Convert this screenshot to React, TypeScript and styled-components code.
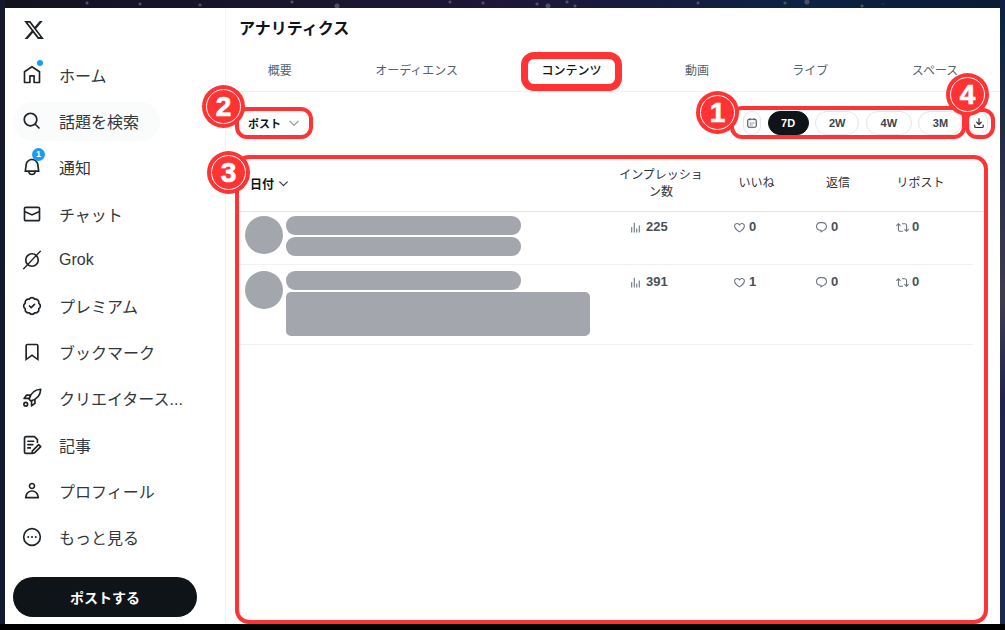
import React from 'react';
import styled, { createGlobalStyle } from 'styled-components';

const GlobalStyle = createGlobalStyle`
  html, body {
    margin: 0;
    padding: 0;
    background: #000;
  }
  body {
    font-family: 'Liberation Sans', 'Noto Sans CJK JP', sans-serif;
  }
`;

const Desktop = styled.div`
  position: relative;
  width: 1005px;
  height: 630px;
  overflow: hidden;
  background-color: #000;
`;

// speckles of the wallpaper that show above the window
const stars = [
  [87, 3, 2], [140, 4, 2], [200, 5, 2], [292, 2, 2], [337, 6, 3], [450, 2, 2], [483, 3, 2],
  [537, 4, 2], [548, 6, 3], [567, 2, 2], [575, 6, 2], [698, 3, 2], [785, 3, 2], [807, 2, 3], [862, 6, 2], [883, 4, 1],
]
  .map(([x, y, r]) => `radial-gradient(circle at ${x}px ${y}px, #4f4f62 0 ${r - 1}px, transparent ${r}px)`)
  .join(', ');

const Wallpaper = styled.div`
  height: 624px;
  padding: 8px 5px 0;
  box-sizing: border-box;
  background:
    ${stars},
    linear-gradient(180deg, #0c2040 0, #3f3c4c 300px, #1e2450 400px, #1c2850 100%) right / 5px 100% no-repeat,
    linear-gradient(180deg, #141828 0, #141a34 100%) left / 5px 100% no-repeat,
    linear-gradient(90deg, #13131f 0%, #1f1638 50%, #0d2343 80%, #0a1a33 100%);
`;

const Window = styled.div`
  display: flex;
  height: 616px;
  background-color: #fff;
`;

const Sidebar = styled.nav`
  display: flex;
  flex-direction: column;
  flex: 0 0 221px;
  box-sizing: border-box;
  border-right: 1px solid #eff3f4;
`;

const LogoRow = styled.div`
  display: flex;
  align-items: center;
  height: 44px;
  padding-left: 18px;
`;

const NavList = styled.div`
  display: flex;
  flex-direction: column;
`;

const NavRow = styled.div`
  display: flex;
  align-items: center;
  height: 46.2px;
`;

const NavPill = styled.div<{ $active?: boolean }>`
  display: flex;
  align-items: center;
  gap: 17px;
  height: 39px;
  width: 147px;
  margin-left: 8px;
  padding-left: 9px;
  box-sizing: border-box;
  border-radius: 20px;
  white-space: nowrap;
  background-color: ${({ $active }) => ($active ? '#fafbfb' : 'transparent')};
`;

const NavIcon = styled.span`
  position: relative;
  display: flex;
  flex: 0 0 20px;
  color: #1f2428;
`;

const NavLabel = styled.span`
  font-size: 16px;
  color: #33383d;
`;

const Dot = styled.span`
  position: absolute;
  top: -5px;
  right: -1px;
  width: 6px;
  height: 6px;
  border-radius: 50%;
  background-color: #1d9bf0;
`;

const CountBadge = styled.span`
  position: absolute;
  top: -9px;
  right: -3px;
  width: 13px;
  height: 13px;
  border-radius: 50%;
  background-color: #1d9bf0;
  color: #fff;
  font-size: 9px;
  font-weight: 700;
  line-height: 13px;
  text-align: center;
`;

const PostButton = styled.button`
  margin: 17px 0 0 8px;
  width: 184px;
  height: 40px;
  border: none;
  border-radius: 20px;
  background-color: #0f1419;
  color: #fff;
  font-family: inherit;
  font-size: 14px;
  font-weight: 700;
`;

const Main = styled.main`
  display: flex;
  flex-direction: column;
  flex: 1;
  min-width: 0;
`;

const Title = styled.h1`
  margin: 0;
  padding: 11px 0 0 13px;
  height: 28px;
  font-size: 16px;
  line-height: 20px;
  font-weight: 700;
  color: #0f1419;
`;

const Tabs = styled.div`
  display: flex;
  justify-content: space-around;
  align-items: center;
  height: 44px;
  border-bottom: 1px solid #eff3f4;
  box-sizing: content-box;
`;

const Tab = styled.span<{ $active?: boolean }>`
  font-size: 12px;
  font-weight: ${({ $active }) => ($active ? 500 : 400)};
  color: ${({ $active }) => ($active ? '#0f1419' : '#536471')};
`;

const Toolbar = styled.div`
  display: flex;
  align-items: center;
  justify-content: space-between;
  height: 61px;
  padding: 0 12px 0 22px;
`;

const TypeSelect = styled.div`
  display: flex;
  align-items: center;
  gap: 6px;
  font-size: 11px;
  font-weight: 700;
  color: #0f1419;
`;

const RangeGroup = styled.div`
  display: flex;
  align-items: center;
  gap: 6.6px;
`;

const RangeButton = styled.span<{ $active?: boolean; $width: number }>`
  display: flex;
  align-items: center;
  justify-content: center;
  width: ${({ $width }) => $width}px;
  height: 24px;
  box-sizing: border-box;
  border-radius: 12px;
  border: 1px solid ${({ $active }) => ($active ? '#0f1419' : '#e1e6ea')};
  background-color: ${({ $active }) => ($active ? '#0f1419' : '#fff')};
  color: ${({ $active }) => ($active ? '#fff' : '#3c444c')};
  font-size: 11px;
  font-weight: 700;
`;

const TableBox = styled.section`
  box-sizing: border-box;
  height: 468px;
  margin: 0 13px 0 12px;
  border: 1px solid #eff3f4;
  border-radius: 14px;
`;

const HeaderRow = styled.div`
  display: grid;
  grid-template-columns: 365px 111px 82px 81px 84px;
  align-items: center;
  height: 55px;
  padding-top: 2px;
  border-bottom: 1px solid #dfe4e8;
`;

const DateHead = styled.div`
  display: flex;
  align-items: center;
  gap: 3px;
  padding-left: 11px;
  font-size: 12px;
  font-weight: 700;
  color: #0f1419;
`;

const HeadCell = styled.div<{ $wide?: boolean }>`
  width: ${({ $wide }) => ($wide ? '84px' : 'auto')};
  margin-left: ${({ $wide }) => ($wide ? '15px' : '1px')};
  font-size: 12px;
  line-height: 17px;
  text-align: center;
  color: #2f353b;
`;

const Row = styled.div<{ $height: number; $pad: number }>`
  display: grid;
  grid-template-columns: 365px 111px 82px 81px 84px;
  align-items: start;
  height: ${({ $height }) => $height}px;
  padding-top: ${({ $pad }) => $pad}px;
  margin-right: 13px;
  box-sizing: border-box;
  border-bottom: 1px solid #eff3f4;
`;

const PostCell = styled.div`
  display: flex;
  gap: 3px;
  padding-left: 6px;
`;

const Avatar = styled.div`
  flex: 0 0 38px;
  height: 38px;
  border-radius: 50%;
  background-color: #a3a6ad;
`;

const MaskColumn = styled.div`
  display: flex;
  flex-direction: column;
  gap: 2px;
`;

const MaskLine = styled.div`
  width: 235px;
  height: 19px;
  border-radius: 9px;
  background-color: #a3a6ad;
`;

const MaskBlock = styled.div`
  width: 304px;
  height: 44px;
  border-radius: 5px;
  background-color: #a3a6ad;
`;

const ValueCell = styled.div<{ $wide?: boolean }>`
  display: flex;
  align-items: flex-start;
  gap: ${({ $wide }) => ($wide ? '4px' : '3px')};
  padding: 3.5px 0 0 ${({ $wide }) => ($wide ? '25px' : '18px')};
  font-size: 13px;
  line-height: 14px;
  font-weight: 700;
  color: #4a5159;
`;

const SmallIcon = styled.svg`
  flex: 0 0 13px;
  width: 13px;
  height: 13px;
  margin-top: 1px;
  fill: #6b7680;
`;

const Frame = styled.div<{ $x: number; $y: number; $w: number; $h: number; $border: number; $radius: number }>`
  position: absolute;
  left: ${({ $x }) => $x}px;
  top: ${({ $y }) => $y}px;
  width: ${({ $w }) => $w}px;
  height: ${({ $h }) => $h}px;
  box-sizing: border-box;
  border: ${({ $border }) => $border}px solid #ff3333;
  border-radius: ${({ $radius }) => $radius}px;
`;

const Marker = styled.div<{ $x: number; $y: number }>`
  position: absolute;
  left: ${({ $x }) => $x}px;
  top: ${({ $y }) => $y}px;
  display: flex;
  align-items: center;
  justify-content: center;
  width: 43px;
  height: 43px;
  box-sizing: border-box;
  border-radius: 50%;
  background-color: #ff3333;
  &::before {
    content: '';
    position: absolute;
    inset: 4px;
    border: 1.5px solid #fff;
    border-radius: 50%;
  }
`;

const MarkerNumber = styled.span`
  font-size: 28px;
  font-weight: 700;
  line-height: 1;
  color: #fff;
  -webkit-text-stroke: 0.7px #fff;
`;

const Icon: React.FC<{ d: string }> = ({ d }) => (
  <svg viewBox="0 0 24 24" width="20" height="20" fill="currentColor">
    <path d={d} />
  </svg>
);

const StrokeIcon: React.FC<{ children: React.ReactNode }> = ({ children }) => (
  <svg
    viewBox="0 0 24 24"
    width="20"
    height="20"
    fill="none"
    stroke="currentColor"
    strokeWidth="2"
    strokeLinecap="round"
    strokeLinejoin="round"
  >
    {children}
  </svg>
);

const paths = {
  x: 'M18.244 2.25h3.308l-7.227 8.26 8.502 11.24H16.17l-5.214-6.817L4.99 21.75H1.68l7.73-8.835L1.254 2.25H8.08l4.713 6.231zm-1.161 17.52h1.833L7.084 4.126H5.117z',
  home: 'M21.591 7.146L12.52 1.157c-.316-.21-.724-.21-1.04 0l-9.071 5.99c-.26.173-.409.456-.409.757v13.183c0 .502.418.913.929.913h6.638c.511 0 .929-.41.929-.913v-7.075h3.008v7.075c0 .502.418.913.929.913h6.639c.51 0 .928-.41.928-.913V7.904c0-.301-.158-.584-.408-.758zM20 20l-4.5.01.011-7.097c0-.502-.418-.913-.928-.913H9.44c-.511 0-.929.41-.929.913L8.5 20H4V8.773l8.011-5.342L20 8.764z',
  search: 'M10.25 3.75c-3.59 0-6.5 2.91-6.5 6.5s2.91 6.5 6.5 6.5c1.795 0 3.419-.726 4.596-1.904 1.178-1.177 1.904-2.801 1.904-4.596 0-3.59-2.91-6.5-6.5-6.5zm-8.5 6.5c0-4.694 3.806-8.5 8.5-8.5s8.5 3.806 8.5 8.5c0 1.986-.682 3.815-1.824 5.262l4.781 4.781-1.414 1.414-4.781-4.781c-1.447 1.142-3.276 1.824-5.262 1.824-4.694 0-8.5-3.806-8.5-8.5z',
  bell: 'M19.993 9.042C19.48 5.017 16.054 2 11.996 2s-7.49 3.021-7.999 7.051L2.866 18H7.1c.463 2.282 2.481 4 4.9 4s4.437-1.718 4.9-4h4.236l-1.143-8.958zM12 20c-1.306 0-2.417-.835-2.829-2h5.658c-.412 1.165-1.523 2-2.829 2zm-6.866-4l.847-6.698C6.364 6.272 8.941 4 11.996 4s5.627 2.268 6.013 5.295L18.864 16H5.134z',
  mail: 'M1.998 5.5c0-1.381 1.119-2.5 2.5-2.5h15c1.381 0 2.5 1.119 2.5 2.5v13c0 1.381-1.119 2.5-2.5 2.5h-15c-1.381 0-2.5-1.119-2.5-2.5v-13zm2.5-.5c-.276 0-.5.224-.5.5v2.764l8 3.638 8-3.636V5.5c0-.276-.224-.5-.5-.5h-15zm15.5 5.463l-8 3.636-8-3.638V18.5c0 .276.224.5.5.5h15c.276 0 .5-.224.5-.5v-8.037z',
  bookmark: 'M4 4.5C4 3.12 5.119 2 6.5 2h11C18.881 2 20 3.12 20 4.5v18.44l-8-5.71-8 5.71V4.5zM6.5 4c-.276 0-.5.22-.5.5v14.56l6-4.29 6 4.29V4.5c0-.28-.224-.5-.5-.5h-11z',
  person: 'M5.651 19h12.698c-.337-1.8-1.023-3.21-1.945-4.19C15.318 13.65 13.838 13 12 13s-3.317.65-4.404 1.81c-.922.98-1.608 2.39-1.945 4.19zm.486-5.56C7.627 11.85 9.648 11 12 11s4.373.85 5.863 2.44c1.477 1.58 2.366 3.8 2.632 6.46l.11 1.1H3.395l.11-1.1c.266-2.66 1.155-4.88 2.632-6.46zM12 4c-1.105 0-2 .9-2 2s.895 2 2 2 2-.9 2-2-.895-2-2-2zM8 6c0-2.21 1.791-4 4-4s4 1.79 4 4-1.791 4-4 4-4-1.79-4-4z',
  heart: 'M16.697 5.5c-1.222-.06-2.679.51-3.89 2.16l-.805 1.09-.806-1.09C9.984 6.01 8.526 5.44 7.304 5.5c-1.243.07-2.349.78-2.91 1.91-.552 1.12-.633 2.78.479 4.82 1.074 1.97 3.257 4.27 7.129 6.61 3.87-2.34 6.052-4.64 7.126-6.61 1.111-2.04 1.03-3.7.477-4.82-.561-1.13-1.666-1.84-2.908-1.91zm4.187 7.69c-1.351 2.48-4.001 5.12-8.379 7.67l-.503.3-.504-.3c-4.379-2.55-7.029-5.19-8.382-7.67-1.36-2.5-1.41-4.86-.514-6.67.887-1.79 2.647-2.91 4.601-3.01 1.651-.09 3.368.56 4.798 2.01 1.429-1.45 3.146-2.1 4.796-2.01 1.954.1 3.714 1.22 4.601 3.01.896 1.81.846 4.17-.514 6.67z',
  comment: 'M1.751 10c0-4.42 3.584-8 8.005-8h4.366c4.49 0 8.129 3.64 8.129 8.13 0 2.96-1.607 5.68-4.196 7.11l-8.054 4.46v-3.69h-.067c-4.49.1-8.183-3.51-8.183-8.01zm8.005-6c-3.317 0-6.005 2.69-6.005 6 0 3.37 2.77 6.08 6.138 6.01l.351-.01h1.761v2.3l5.087-2.81c1.951-1.08 3.163-3.13 3.163-5.36 0-3.39-2.744-6.13-6.129-6.13H9.756z',
  repost: 'M4.5 3.88l4.432 4.14-1.364 1.46L5.5 7.55V16c0 1.1.896 2 2 2H13v2H7.5c-2.209 0-4-1.79-4-4V7.55L1.432 9.48.068 8.02 4.5 3.88zM16.5 6H11V4h5.5c2.209 0 4 1.79 4 4v8.45l2.068-1.93 1.364 1.46-4.432 4.14-4.432-4.14 1.364-1.46 2.068 1.93V8c0-1.1-.896-2-2-2z',
  bars: 'M8.75 21V3h2v18h-2zM18 21V8.5h2V21h-2zM4 21l.004-10h2L6 21H4zm9.248 0v-7h2v7h-2z',
};

const GrokIcon = () => (
  <StrokeIcon>
    <circle cx="12" cy="12" r="7.5" />
    <path d="M22 1.500L2 22.500" strokeWidth="1.600" />
  </StrokeIcon>
);

const PremiumIcon = () => (
  <StrokeIcon>
    <path d="M3.850 8.620a4 4 0 0 1 4.780-4.770 4 4 0 0 1 6.740 0 4 4 0 0 1 4.780 4.780 4 4 0 0 1 0 6.740 4 4 0 0 1-4.770 4.780 4 4 0 0 1-6.750 0 4 4 0 0 1-4.780-4.770 4 4 0 0 1 0-6.760Z" />
    <path d="m9 12 2 2 4-4" />
  </StrokeIcon>
);

const RocketIcon = () => (
  <StrokeIcon>
    <path d="M8.500 13.500C10 7 15 2 22.500 1.500 22 9 17 14 10.500 15.500z" />
    <path d="M9.500 8.500H5.500L2.500 12.500h6" />
    <path d="M15.500 14.500V18.500L11.500 21.500v-6" />
    <circle cx="4.500" cy="19.500" r="2.200" />
  </StrokeIcon>
);

const ArticleIcon = () => (
  <StrokeIcon>
    <path d="M10.500 22H5a2 2 0 0 1-2-2V4a2 2 0 0 1 2-2h10l3.500 3.500V9" />
    <path d="M7 7.500h7M7 11.500h6M7 15.500h3" />
    <path d="M20 11.500l2.500 2.500-7.500 7.500-3.200.7.700-3.200z" />
  </StrokeIcon>
);

const MoreIcon = () => (
  <StrokeIcon>
    <circle cx="12" cy="12" r="10" />
    <path d="M7.500 12h.01M12 12h.01M16.500 12h.01" strokeWidth="2.400" />
  </StrokeIcon>
);

const Chevron: React.FC<{ color: string; size: number }> = ({ color, size }) => (
  <svg
    viewBox="0 0 24 24"
    width={size}
    height={size}
    fill="none"
    stroke={color}
    strokeWidth="2.200"
    strokeLinecap="round"
    strokeLinejoin="round"
  >
    <path d="m5 9 7 7 7-7" />
  </svg>
);

const navItems: { label: string; icon: React.ReactNode; extra?: React.ReactNode; active?: boolean }[] = [
  { label: 'ホーム', icon: <Icon d={paths.home} />, extra: <Dot /> },
  { label: '話題を検索', icon: <Icon d={paths.search} />, active: true },
  { label: '通知', icon: <Icon d={paths.bell} />, extra: <CountBadge>1</CountBadge> },
  { label: 'チャット', icon: <Icon d={paths.mail} /> },
  { label: 'Grok', icon: <GrokIcon /> },
  { label: 'プレミアム', icon: <PremiumIcon /> },
  { label: 'ブックマーク', icon: <Icon d={paths.bookmark} /> },
  { label: 'クリエイタース...', icon: <RocketIcon /> },
  { label: '記事', icon: <ArticleIcon /> },
  { label: 'プロフィール', icon: <Icon d={paths.person} /> },
  { label: 'もっと見る', icon: <MoreIcon /> },
];

const tabs = ['概要', 'オーディエンス', 'コンテンツ', '動画', 'ライブ', 'スペース'];

const ranges = [
  { label: '7D', width: 41, active: true },
  { label: '2W', width: 44 },
  { label: '4W', width: 46 },
  { label: '3M', width: 44 },
];

const rows = [
  { height: 53, pad: 4, impressions: 225, likes: 0, replies: 0, reposts: 0, block: false },
  { height: 80, pad: 6, impressions: 391, likes: 1, replies: 0, reposts: 0, block: true },
];

const Stat: React.FC<{ icon: string; value: number; wide?: boolean }> = ({ icon, value, wide }) => (
  <ValueCell $wide={wide}>
    <SmallIcon viewBox="0 0 24 24">
      <path d={icon} />
    </SmallIcon>
    {value}
  </ValueCell>
);

const App: React.FC = () => {
  return (
    <Desktop>
      <GlobalStyle />
      <Wallpaper>
        <Window>
          <Sidebar>
            <LogoRow>
              <svg viewBox="0 0 24 24" width="22" height="22" fill="#1f2428">
                <path d={paths.x} />
              </svg>
            </LogoRow>
            <NavList>
              {navItems.map((item) => (
                <NavRow key={item.label}>
                  <NavPill $active={item.active}>
                    <NavIcon>
                      {item.icon}
                      {item.extra}
                    </NavIcon>
                    <NavLabel>{item.label}</NavLabel>
                  </NavPill>
                </NavRow>
              ))}
            </NavList>
            <PostButton>ポストする</PostButton>
          </Sidebar>
          <Main>
            <Title>アナリティクス</Title>
            <Tabs>
              {tabs.map((tab) => (
                <Tab key={tab} $active={tab === 'コンテンツ'}>
                  {tab}
                </Tab>
              ))}
            </Tabs>
            <Toolbar>
              <TypeSelect>
                ポスト
                <Chevron color="#9aa3ab" size={14} />
              </TypeSelect>
              <RangeGroup>
                <RangeButton $width={18}>
                  <svg viewBox="0 0 24 24" width="12" height="12" fill="none" stroke="#4a525a" strokeWidth="2.200">
                    <rect x="3.500" y="4.500" width="17" height="16" rx="3" />
                    <path d="M8 2.500v4M16 2.500v4M7.500 12h2M11 12h2M14.500 12h2M7.500 16h2M11 16h2" />
                  </svg>
                </RangeButton>
                {ranges.map((range) => (
                  <RangeButton key={range.label} $width={range.width} $active={range.active}>
                    {range.label}
                  </RangeButton>
                ))}
                <RangeButton $width={19}>
                  <svg viewBox="0 0 24 24" width="12" height="12" fill="none" stroke="#2f353b" strokeWidth="2.400" strokeLinecap="round" strokeLinejoin="round">
                    <path d="M12 3v12M7.500 10.500 12 15l4.500-4.500M3.500 16v3a2 2 0 0 0 2 2h13a2 2 0 0 0 2-2v-3" />
                  </svg>
                </RangeButton>
              </RangeGroup>
            </Toolbar>
            <TableBox>
              <HeaderRow>
                <DateHead>
                  日付
                  <Chevron color="#2f353b" size={13} />
                </DateHead>
                <HeadCell $wide>インプレッション数</HeadCell>
                <HeadCell>いいね</HeadCell>
                <HeadCell>返信</HeadCell>
                <HeadCell>リポスト</HeadCell>
              </HeaderRow>
              {rows.map((row) => (
                <Row key={row.impressions} $height={row.height} $pad={row.pad}>
                  <PostCell>
                    <Avatar />
                    <MaskColumn>
                      <MaskLine />
                      {row.block ? <MaskBlock /> : <MaskLine />}
                    </MaskColumn>
                  </PostCell>
                  <Stat icon={paths.bars} value={row.impressions} wide />
                  <Stat icon={paths.heart} value={row.likes} />
                  <Stat icon={paths.comment} value={row.replies} />
                  <Stat icon={paths.repost} value={row.reposts} />
                </Row>
              ))}
            </TableBox>
          </Main>
        </Window>
      </Wallpaper>

      <Frame $x={521} $y={52} $w={101} $h={39} $border={7} $radius={13} />
      <Frame $x={235} $y={107} $w={78} $h={32} $border={4} $radius={12} />
      <Frame $x={730} $y={106} $w={236} $h={33} $border={4} $radius={12} />
      <Frame $x={965} $y={108} $w={30} $h={31} $border={4} $radius={12} />
      <Frame $x={235} $y={155} $w={753} $h={469} $border={4} $radius={14} />

      <Marker $x={696} $y={91}>
        <MarkerNumber>1</MarkerNumber>
      </Marker>
      <Marker $x={202} $y={85}>
        <MarkerNumber>2</MarkerNumber>
      </Marker>
      <Marker $x={207} $y={151}>
        <MarkerNumber>3</MarkerNumber>
      </Marker>
      <Marker $x={946} $y={73}>
        <MarkerNumber>4</MarkerNumber>
      </Marker>
    </Desktop>
  );
};

export default App;
